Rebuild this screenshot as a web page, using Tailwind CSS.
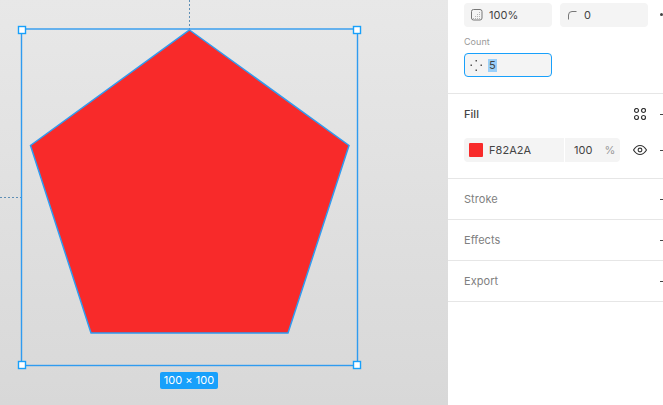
<!doctype html>
<html><head><meta charset="utf-8"><script src="https://cdn.jsdelivr.net/npm/@tailwindcss/browser@4"></script></head>
<body class="m-0 overflow-hidden bg-white">
<div class="flex w-[663px] h-[405px] overflow-hidden font-['Inter',sans-serif] text-[11px] text-[#444] tracking-[0.05px]">
  <div class="relative w-[448px] h-full bg-gradient-to-b from-[#e8e8e8] to-[#d8d8d8] shrink-0">
    <svg class="absolute inset-0" width="448" height="405" viewBox="0 0 448 405" fill="none">
      <line x1="189.500" y1="0" x2="189.500" y2="29" stroke="#5f8fb5" stroke-dasharray="2 2"/>
      <line x1="0" y1="197.500" x2="21" y2="197.500" stroke="#5f8fb5" stroke-dasharray="2 2"/>
      <polygon points="189.500,30 349,145.500 288,333 91,333 30.500,145.500" fill="#F82A2A" stroke="#2f9bf0" stroke-width="1.500"/>
      <rect x="21.500" y="29" width="336" height="336.500" stroke="#2f9bf0" stroke-width="1.400"/>
      <rect x="18.500" y="26.500" width="7" height="7" fill="#fff" stroke="#18a0fb" stroke-width="1.400"/>
      <rect x="353.500" y="26.500" width="7" height="7" fill="#fff" stroke="#18a0fb" stroke-width="1.400"/>
      <rect x="18.500" y="361.500" width="7" height="7" fill="#fff" stroke="#18a0fb" stroke-width="1.400"/>
      <rect x="353.500" y="361.500" width="7" height="7" fill="#fff" stroke="#18a0fb" stroke-width="1.400"/>
    </svg>
    <div class="absolute left-[160px] top-[372px] w-[58px] h-[17px] rounded-[2px] bg-[#18a0fb] text-white flex items-center justify-center">100 × 100</div>
  </div>
  <div class="relative flex-1 bg-white h-full">
    <div class="h-[94px] border-b border-[#e6e6e6] pl-[16px] pt-[3px] flex flex-col">
      <div class="flex gap-2">
        <div class="w-[88px] h-6 bg-[#f4f4f4] rounded-[4px] flex items-center pl-[7px] gap-[6px]">
          <svg width="12" height="12" viewBox="0 0 12 12" fill="none"><rect x="0.500" y="0.500" width="10.500" height="10.500" rx="2" stroke="#777"/><path d="M8.500 3v.5M8.500 5v.5M8.500 7v.5M8.500 9v.5M6.500 5v.5M6.500 7v.5M6.500 9v.5M4.500 7v.5M4.500 9v.5M2.500 9v.5" stroke="#777"/></svg>
          <span>100%</span>
        </div>
        <div class="w-[88px] h-6 bg-[#f4f4f4] rounded-[4px] flex items-center pl-[8px] gap-[7px]">
          <svg width="9" height="9" viewBox="0 0 9 9" fill="none"><path d="M0.500 8.500V4a3.500 3.500 0 0 1 3.500-3.500h4.500" stroke="#777"/></svg>
          <span>0</span>
        </div>
      </div>
      <div class="mt-[8px] h-[14px] leading-[14px] text-[9px] text-[#999]">Count</div>
      <div class="mt-[4px] w-[88px] h-6 bg-[#f4f4f4] rounded-[4px] border-[1.500px] border-[#18a0fb] flex items-center pl-[5px] gap-[5px]">
        <svg width="13" height="13" viewBox="0 0 13 13" fill="#555"><rect x="5.500" y="1" width="1.500" height="1.500"/><rect x="0.500" y="5.500" width="1.500" height="1.500"/><rect x="10.500" y="5.500" width="1.500" height="1.500"/><rect x="5.500" y="10.500" width="1.500" height="1.500"/></svg>
        <span class="bg-[#9bd0fa] px-[1px] leading-[13px]">5</span>
      </div>
    </div>
    <div class="h-[85px] border-b border-[#e6e6e6] pl-[16px] flex flex-col">
      <div class="h-10 flex items-center font-medium">
        <span>Fill</span>
      </div>
      <div class="mt-[4px] w-[156px] h-6 bg-[#f4f4f4] rounded-[4px] flex items-center">
        <div class="w-[101px] h-full flex items-center pl-[5px] gap-[6px] border-r border-white">
          <div class="w-[14px] h-[14px] bg-[#F82A2A] rounded-[1px]"></div>
          <span>F82A2A</span>
        </div>
        <span class="ml-[9px]">100</span>
        <span class="ml-[12px] text-[#999]">%</span>
      </div>
    </div>
    <div class="h-[41px] border-b border-[#e6e6e6] pl-[16px] flex items-center text-[#808080]">Stroke</div>
    <div class="h-[41px] border-b border-[#e6e6e6] pl-[16px] flex items-center text-[#808080]">Effects</div>
    <div class="h-[41px] border-b border-[#e6e6e6] pl-[16px] flex items-center text-[#808080]">Export</div>
    <svg class="absolute left-[186px] top-[108px]" width="12" height="12" viewBox="0 0 12 12" fill="none" stroke="#333" stroke-width="1.200"><circle cx="2.500" cy="2.500" r="2"/><circle cx="9.500" cy="2.500" r="2"/><circle cx="2.500" cy="9.500" r="2"/><circle cx="9.500" cy="9.500" r="2"/></svg>
    <svg class="absolute left-[185px] top-[144px]" width="14" height="12" viewBox="0 0 14 12" fill="none" stroke="#333" stroke-width="1.100"><path d="M0.500 6c1.800-3 3.800-4.500 6.500-4.500S11.700 3 13.500 6c-1.800 3-3.800 4.500-6.500 4.500S2.300 9 0.500 6z"/><circle cx="7" cy="6" r="1.900"/></svg>
    <svg class="absolute left-[212px] top-0" width="3" height="300" viewBox="0 0 3 300" fill="#444">
      <circle cx="1.500" cy="14.500" r="1.500"/>
      <rect y="114" width="3" height="1"/>
      <rect y="150" width="3" height="1"/>
      <rect y="199" width="3" height="1"/>
      <rect y="240" width="3" height="1"/>
      <rect y="281" width="3" height="1"/>
    </svg>
  </div>
</div>
</body></html>
